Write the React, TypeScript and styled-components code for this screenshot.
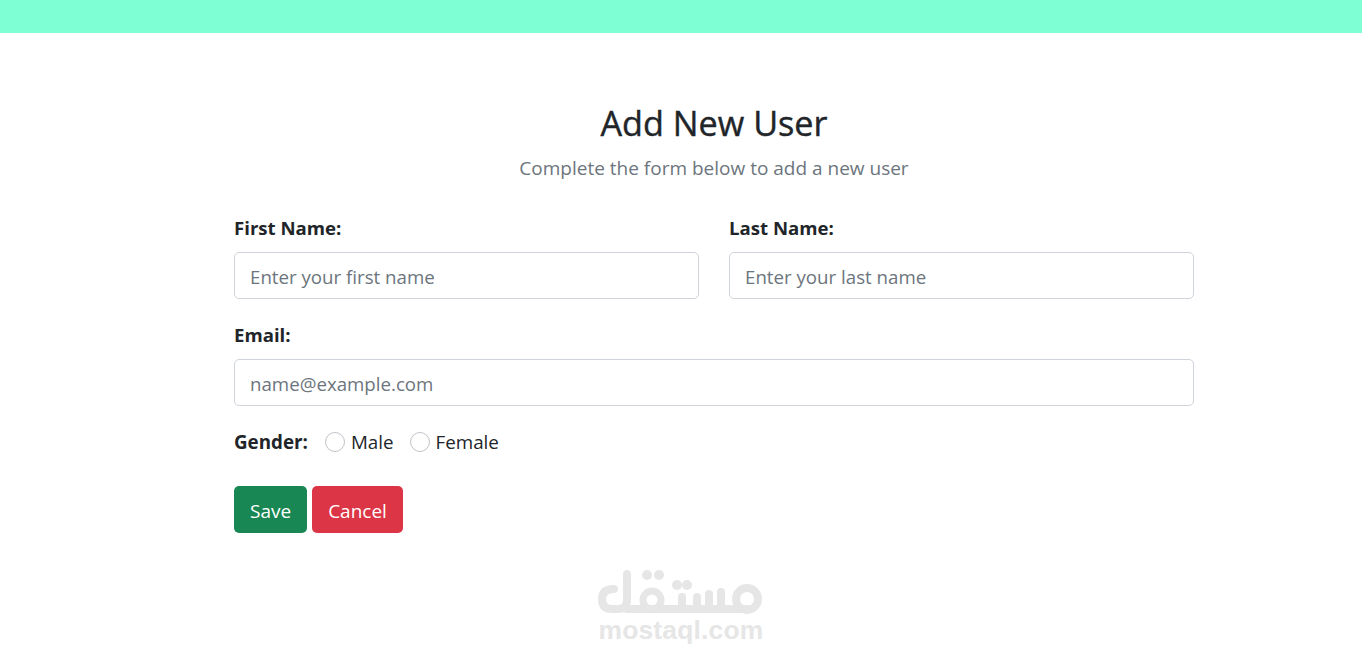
import React from "react";
import styled, { createGlobalStyle } from "styled-components";

const Global = createGlobalStyle`
  html, body { margin: 0; padding: 0; background: #fff; }
  body { font-family: "Open Sans", "Noto Sans", "Liberation Sans", sans-serif; color: #212529; height: 658px; overflow: hidden; }
  * { box-sizing: border-box; }
`;

const TopBar = styled.div`
  height: 33px;
  background: #7fffd4;
`;

const Main = styled.main`
  width: 960px;
  margin-left: 234px;
`;

const Header = styled.header`
  text-align: center;
  padding-top: 68px;
`;

const Title = styled.h1`
  margin: 0;
  font-size: 34.2px;
  line-height: 43px;
  font-weight: 400;
  -webkit-text-stroke: 0.4px #212529;
`;

const Subtitle = styled.p`
  margin: 11px 0 0;
  font-size: 19px;
  line-height: 27px;
  color: #6c757d;
`;

const Row = styled.div`
  display: grid;
  grid-template-columns: 465px 465px;
  column-gap: 30px;
  margin-top: 32px;
`;

const Field = styled.div<{ $top?: number }>`
  margin-top: ${(p) => p.$top ?? 0}px;
`;

const Label = styled.label`
  display: block;
  font-size: 18.6px;
  font-weight: 700;
  line-height: 27px;
  margin-bottom: 11px;
`;

const Input = styled.input`
  display: block;
  width: 100%;
  height: 47px;
  padding: 10px 15px 8px;
  font: inherit;
  font-size: 18.7px;
  color: #212529;
  border: 1px solid #ced4da;
  border-radius: 5px;
  background: #fff;
  &::placeholder { color: #6c757d; opacity: 1; }
`;

const GenderRow = styled.div`
  display: flex;
  align-items: center;
  margin-top: 22px;
  height: 27px;
  font-size: 18.8px;
`;

const GenderLabel = styled.span`
  font-weight: 700;
  margin-right: 17px;
`;

const Radio = styled.span`
  width: 20px;
  height: 20px;
  border: 1px solid #bfc4c9;
  border-radius: 50%;
  margin-right: 6px;
`;

const RadioText = styled.span`
  margin-right: 16px;
`;

const Actions = styled.div`
  display: flex;
  gap: 5px;
  margin-top: 31px;
`;

const Button = styled.button<{ $bg: string }>`
  height: 47px;
  padding: 3px 16px 0;
  font: inherit;
  font-size: 19px;
  color: #fff;
  background: ${(p) => p.$bg};
  border: 0;
  border-radius: 5px;
`;

const Footer = styled.div`
  display: flex;
  flex-direction: column;
  align-items: center;
  margin-top: 35px;
`;

const LogoText = styled.div`
  font-family: "Liberation Sans", Arial, sans-serif;
  font-weight: 700;
  font-size: 26.4px;
  line-height: 26px;
  letter-spacing: 0.2px;
  color: #e6e6e6;
  margin-top: 1px;
`;

const Logo = () => (
  <svg width="166" height="48" viewBox="0 0 166 48" aria-label="مستقل" fill="none" stroke="#e6e6e6" strokeWidth="8" strokeLinecap="round" strokeLinejoin="round">
    <path d="M29 6 V32 Q29 41 20 41 H14 Q4 41 4 31 Q4 21 16 21" />
    <path d="M29 41 H150" />
    <circle cx="54" cy="32" r="9" strokeWidth="7" />
    <path d="M84 41 V29 M99 41 V29 M111 41 V26 M123 41 V24" />
    <circle cx="149" cy="31" r="11" />
    <g fill="#e6e6e6" stroke="none">
      <circle cx="49" cy="7" r="5" /><circle cx="61" cy="7" r="5" />
      <circle cx="79" cy="17" r="5" /><circle cx="89" cy="17" r="5" />
    </g>
  </svg>
);

export default function App() {
  return (
    <>
      <Global />
      <TopBar />
      <Main>
        <Header>
          <Title>Add New User</Title>
          <Subtitle>Complete the form below to add a new user</Subtitle>
        </Header>
        <Row>
          <Field>
            <Label>First Name:</Label>
            <Input placeholder="Enter your first name" />
          </Field>
          <Field>
            <Label>Last Name:</Label>
            <Input placeholder="Enter your last name" />
          </Field>
        </Row>
        <Field $top={22}>
          <Label>Email:</Label>
          <Input placeholder="name@example.com" />
        </Field>
        <GenderRow>
          <GenderLabel>Gender:</GenderLabel>
          <Radio /><RadioText>Male</RadioText>
          <Radio /><RadioText>Female</RadioText>
        </GenderRow>
        <Actions>
          <Button $bg="#198754">Save</Button>
          <Button $bg="#dc3545">Cancel</Button>
        </Actions>
      </Main>
      <Footer>
        <Logo />
        <LogoText>mostaql.com</LogoText>
      </Footer>
    </>
  );
}
